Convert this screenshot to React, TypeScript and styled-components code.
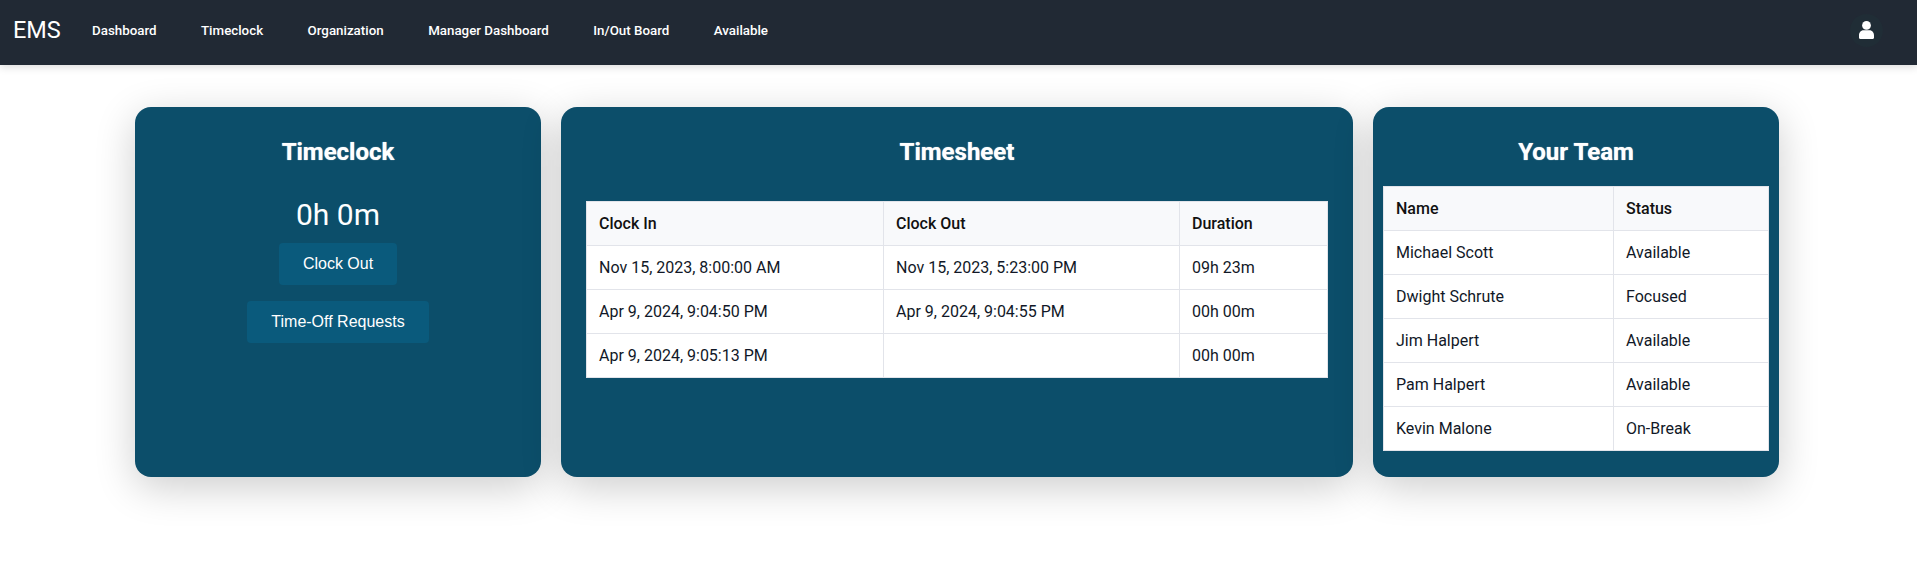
import React from "react";
import styled, { createGlobalStyle } from "styled-components";

const GlobalStyle = createGlobalStyle`
  * {
    box-sizing: border-box;
  }
  html, body, #root {
    height: 100%;
  }
  html, body {
    margin: 0;
    padding: 0;
    background: #fff;
    font-family: Roboto, "Liberation Sans", sans-serif;
  }
`;

const Navbar = styled.nav`
  height: 65px;
  background: #212934;
  display: flex;
  align-items: center;
  padding: 0 34px 5px 13px;
  box-shadow: 0 2px 8px rgba(0, 0, 0, 0.15);
  position: relative;
`;

const Brand = styled.div`
  font-size: 23.5px;
  color: #fff;
  width: 79px;
`;

const NavLinks = styled.div`
  display: flex;
  gap: 44.5px;
  flex: 1;
`;

const NavLink = styled.a`
  color: #fff;
  font-size: 13.33px;
  font-weight: 500;
`;

const UserButton = styled.div`
  width: 33px;
  height: 33px;
  border-radius: 50%;
  background: #202d36;
  display: flex;
  align-items: center;
  justify-content: center;
`;

const Main = styled.main`
  display: flex;
  gap: 20px;
  padding: 42px 138px 0 135px;
`;

const Card = styled.section<{ $grow: number }>`
  flex: ${(p) => p.$grow} 1 0;
  height: 370px;
  background: #0c4e6a;
  border-radius: 16px;
  box-shadow: 0 10px 40px rgba(0, 0, 0, 0.2);
  color: #fff;
  display: flex;
  flex-direction: column;
  align-items: center;
  padding-top: 31px;
`;

const CardTitle = styled.h2<{ $gap: number }>`
  margin: 0 0 ${(p) => p.$gap}px;
  font-size: 24px;
  line-height: 28px;
  font-weight: 700;
  color: #fff;
  text-shadow: 0 0 1px rgba(255, 255, 255, 0.8);
`;

const Hours = styled.div`
  font-size: 30px;
  line-height: 36px;
  margin-bottom: 10px;
`;

const ActionButton = styled.button`
  display: block;
  font-family: "Liberation Sans", Arial, sans-serif;
  font-size: 16px;
  color: #fff;
  background: #0a5a7c;
  border: none;
  border-radius: 4px;
  padding: 0 24px;
  height: 42px;
  margin-bottom: 16px;
`;

const Table = styled.table<{ $inset: number }>`
  width: calc(100% - ${(p) => p.$inset * 2}px);
  border-collapse: collapse;
  table-layout: fixed;
  background: #fff;
  color: #111827;
  font-size: 16px;
`;

const HeadCell = styled.th<{ $width?: number }>`
  height: 44px;
  padding: 0 12px;
  text-align: left;
  font-weight: 500;
  background: #f8f9fb;
  border: 1px solid #e2e4ea;
  color: #111;
  width: ${(p) => (p.$width ? `${p.$width}px` : "auto")};
`;

const Cell = styled.td`
  height: 44px;
  padding: 0 12px;
  border: 1px solid #e2e4ea;
`;

const UserIcon = () => (
  <svg width="15" height="18" viewBox="0 0 15 18" fill="#fff">
    <circle cx="7.5" cy="4.4" r="4.4" />
    <path d="M4.5 9.2h6c2.5 0 4.5 2.3 4.5 5v2.6c0 .7-.5 1.2-1.2 1.2H1.2C.5 18 0 17.5 0 16.8v-2.6c0-2.7 2-5 4.5-5z" />
  </svg>
);

const links = ["Dashboard", "Timeclock", "Organization", "Manager Dashboard", "In/Out Board", "Available"];

const timesheet = [
  ["Nov 15, 2023, 8:00:00 AM", "Nov 15, 2023, 5:23:00 PM", "09h 23m"],
  ["Apr 9, 2024, 9:04:50 PM", "Apr 9, 2024, 9:04:55 PM", "00h 00m"],
  ["Apr 9, 2024, 9:05:13 PM", "", "00h 00m"],
];

const team = [
  ["Michael Scott", "Available"],
  ["Dwight Schrute", "Focused"],
  ["Jim Halpert", "Available"],
  ["Pam Halpert", "Available"],
  ["Kevin Malone", "On-Break"],
];

const App = () => {
  return (
    <>
      <GlobalStyle />
      <Navbar>
        <Brand>EMS</Brand>
        <NavLinks>
          {links.map((l) => (
            <NavLink key={l}>{l}</NavLink>
          ))}
        </NavLinks>
        <UserButton>
          <UserIcon />
        </UserButton>
      </Navbar>
      <Main>
        <Card $grow={406}>
          <CardTitle $gap={31}>Timeclock</CardTitle>
          <Hours>0h 0m</Hours>
          <ActionButton>Clock Out</ActionButton>
          <ActionButton>Time-Off Requests</ActionButton>
        </Card>
        <Card $grow={792}>
          <CardTitle $gap={35}>Timesheet</CardTitle>
          <Table $inset={25}>
            <thead>
              <tr>
                <HeadCell $width={297}>Clock In</HeadCell>
                <HeadCell $width={296}>Clock Out</HeadCell>
                <HeadCell>Duration</HeadCell>
              </tr>
            </thead>
            <tbody>
              {timesheet.map((row) => (
                <tr key={row[0]}>
                  {row.map((c, i) => (
                    <Cell key={i}>{c}</Cell>
                  ))}
                </tr>
              ))}
            </tbody>
          </Table>
        </Card>
        <Card $grow={406}>
          <CardTitle $gap={20}>Your Team</CardTitle>
          <Table $inset={10}>
            <thead>
              <tr>
                <HeadCell $width={230}>Name</HeadCell>
                <HeadCell>Status</HeadCell>
              </tr>
            </thead>
            <tbody>
              {team.map((row) => (
                <tr key={row[0]}>
                  {row.map((c, i) => (
                    <Cell key={i}>{c}</Cell>
                  ))}
                </tr>
              ))}
            </tbody>
          </Table>
        </Card>
      </Main>
    </>
  );
};

export default App;
